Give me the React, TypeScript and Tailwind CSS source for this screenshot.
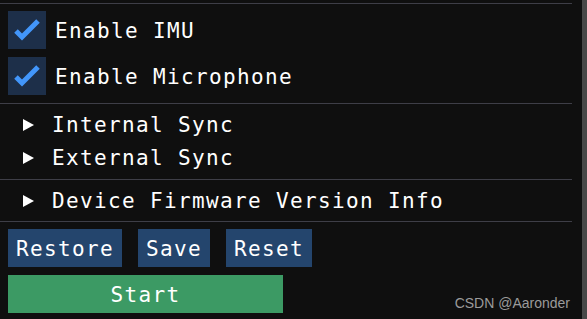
import React from 'react';

const mono = { fontFamily: '"DejaVu Sans Mono", "Liberation Mono", monospace' };

const Separator: React.FC<{ className?: string }> = ({ className = '' }) => (
  <div className={`h-px w-full bg-[#3e3e47] ${className}`} />
);

const Checkbox: React.FC<{ label: string; className?: string }> = ({ label, className = '' }) => (
  <div className={`flex h-[38px] items-center pl-2 ${className}`}>
    <div className="h-[38px] w-[38px] bg-[#1d2f49]">
      <svg width="38" height="38" viewBox="0 0 38 38">
        <polyline points="8,20 14,26 30,10" fill="none" stroke="#4296fa" strokeWidth="5" strokeLinejoin="miter" />
      </svg>
    </div>
    <span className="ml-[9px] mt-[3px] text-[21px] tracking-[1.36px] text-white">{label}</span>
  </div>
);

const TreeNode: React.FC<{ label: string; className?: string }> = ({ label, className = '' }) => (
  <div className={`flex h-[33px] items-center pl-[23px] ${className}`}>
    <svg width="11" height="12" viewBox="0 0 11 12">
      <polygon points="0,0 11,6 0,12" fill="#ffffff" />
    </svg>
    <span className="ml-[18px] mt-[2px] text-[21px] tracking-[1.36px] text-white">{label}</span>
  </div>
);

const Button: React.FC<{ label: string }> = ({ label }) => (
  <button className="flex h-[38px] items-center bg-[#24456d] px-2 pt-[3px] text-[21px] tracking-[1.36px] text-white">
    {label}
  </button>
);

export default function App() {
  return (
    <div className="relative flex h-[319px] w-[587px] overflow-hidden bg-[#0f0f0f]" style={mono}>
      <div className="w-[572px] pt-[3px]">
        <Separator />
        <Checkbox label="Enable IMU" className="mt-[7px]" />
        <Checkbox label="Enable Microphone" className="mt-[8px]" />
        <Separator className="mt-[8px]" />
        <TreeNode label="Internal Sync" className="mt-[4px]" />
        <TreeNode label="External Sync" />
        <Separator className="mt-[5px]" />
        <TreeNode label="Device Firmware Version Info" className="mt-[4px]" />
        <Separator className="mt-[4px]" />
        <div className="mt-[7px] flex gap-4 pl-2">
          <Button label="Restore" />
          <Button label="Save" />
          <Button label="Reset" />
        </div>
        <div className="ml-2 mt-[8px] flex h-[38px] w-[275px] items-center justify-center bg-[#3c9a64] pt-[3px] text-[21px] tracking-[1.36px] text-white">
          Start
        </div>
      </div>
      <div className="w-[10px]" />
      <div className="h-full w-[5px] bg-[#484848]" />
      <span
        className="absolute right-[17px] top-[296px] text-[14px] leading-none text-[#9b9b9b]"
        style={{ fontFamily: '"Liberation Sans", Arial, sans-serif' }}
      >
        CSDN @Aaronder
      </span>
    </div>
  );
}
